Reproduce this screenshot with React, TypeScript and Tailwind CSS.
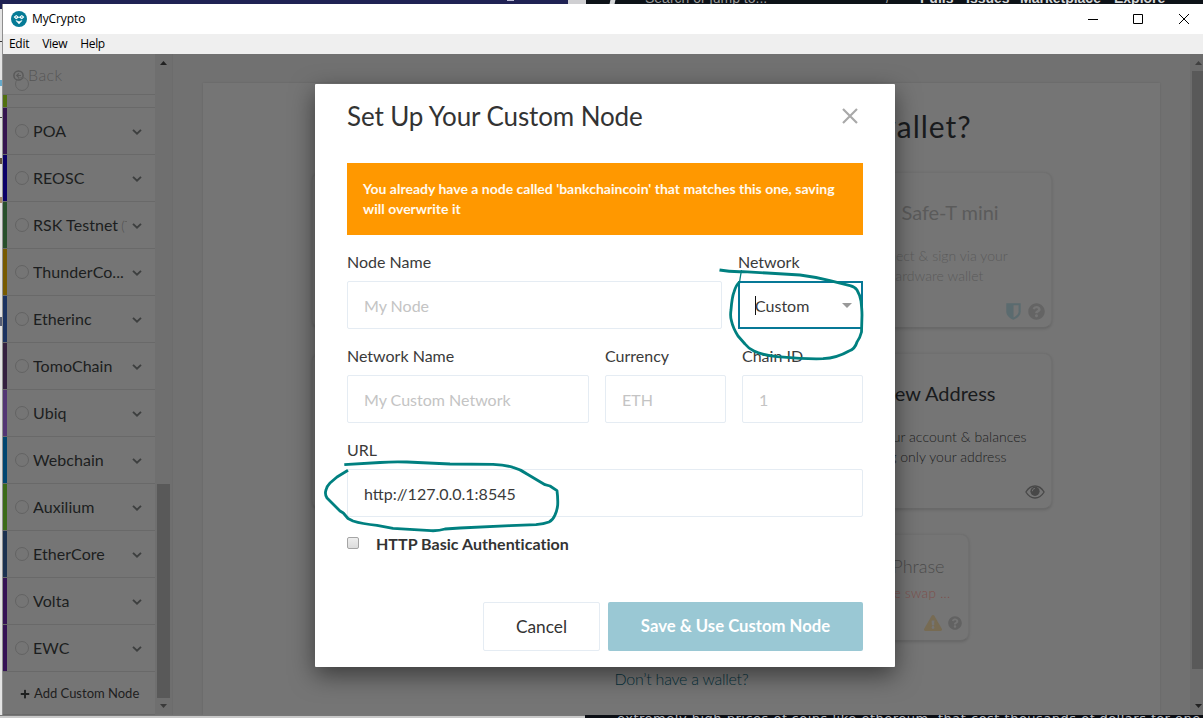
import React from "react";
import { FaQuestionCircle, FaExclamationTriangle, FaPlus } from "react-icons/fa";

const networks = [
  { name: "POA", color: "bg-[#351450]" },
  { name: "REOSC", color: "bg-[#0b0067]" },
  { name: "RSK Testnet", suffix: "(T", color: "bg-[#284f2b]" },
  { name: "ThunderCo...", color: "bg-[#775a00]" },
  { name: "Etherinc", color: "bg-[#1b3260]" },
  { name: "TomoChain", color: "bg-[#34203f]" },
  { name: "Ubiq", color: "bg-[#533574]" },
  { name: "Webchain", color: "bg-[#004570]" },
  { name: "Auxilium", color: "bg-[#3b6a18]" },
  { name: "EtherCore", color: "bg-[#1b3150]" },
  { name: "Volta", color: "bg-[#351255]" },
  { name: "EWC", color: "bg-[#351255]" },
];

const Chevron = () => (
  <svg width="10" height="6" viewBox="0 0 10 6" fill="none" stroke="#3d3f3f" strokeWidth="1.9">
    <path d="M1 .9 5 4.6 9 .9" />
  </svg>
);

const Logo = () => (
  <svg width="16" height="16" viewBox="0 0 16 16">
    <circle cx="8" cy="8" r="8" fill="#057b96" />
    <path d="M2.600 6 5.200 3.900 8 6.100l2.800-2.200L13.400 6l-2.500 2.300L8 6.600 5.100 8.300z" fill="#fff" />
    <path d="M4.300 6 5.300 5.300 6.200 6l-1.100.8zM9.800 6l.9-.7 1 .7-.8.8z" fill="#057b96" />
    <path d="M5 9.600 8 10.700l3-1.100L8 12.900z" fill="#fff" stroke="#fff" strokeWidth=".6" strokeLinejoin="round" />
  </svg>
);

const Shield = () => (
  <svg width="15" height="17" viewBox="0 0 15 17">
    <path fillRule="evenodd" fill="#5b6b6f" d="M.3.3h14.4v8.200c0 4-3.400 6.700-7.200 8.300C3.700 15.200.3 12.500.3 8.500zM7.500 2.300v12.200c2.800-1.400 5.100-3.300 5.100-6.100V2.300z" />
  </svg>
);

const Eye = () => (
  <svg width="20" height="14" viewBox="0 0 20 14">
    <path d="M.9 7C3.200 3.200 6.300 1 10 1s6.800 2.200 9.100 6c-2.300 3.800-5.400 6-9.100 6S3.200 10.800.9 7z" fill="none" stroke="#484848" strokeWidth="1.300" />
    <circle cx="10" cy="6.300" r="4.600" fill="#484848" />
    <path d="M7.400 6.200c0-1.600 1-2.700 2.500-2.700" fill="none" stroke="#757575" strokeWidth="1" />
  </svg>
);

function Sidebar() {
  return (
    <aside className="flex w-[170px] shrink-0 border-r border-[#6c6c6c]">
      <div className="flex w-[152px] flex-col bg-[#757575]">
        <div className="relative flex h-[41px] items-center border-b border-[#696969] pl-[10px] pt-[2px] text-[16px] text-[#565656]">
          <svg width="11" height="11" viewBox="0 0 11 11" fill="none" stroke="#5a5a5a" strokeWidth="1.500">
            <circle cx="5.500" cy="5.500" r="4.600" />
            <path d="M8 5.500H3.800M5.800 3.400 3.700 5.500 5.800 7.600" strokeWidth="1.200" />
          </svg>
          <span className="ml-1 font-light tracking-[0.4px]">Back</span>
          <span className="absolute left-[12px] top-[23px] size-[14px] rounded-full border border-[#636363]" />
        </div>
        <div className="flex h-[13px] border-b border-[#696969]">
          <span className="w-1 bg-[#51700f]" />
        </div>
        {networks.map((n) => (
          <div key={n.name} className="flex h-[47px] items-stretch border-b border-[#696969]">
            <span className={`w-1 shrink-0 ${n.color}`} />
            <div className="flex flex-1 items-center pl-2">
              <span className="size-[14px] shrink-0 rounded-full border border-[#636363]" />
              <span className="ml-1 w-[94px] overflow-hidden whitespace-nowrap text-[16px] leading-6 tracking-[0.05px] text-[#1c1e20]">
                {n.name}
                {n.suffix && <span className="ml-[3px] text-[13px] font-light text-[#4e4e4e]">{n.suffix}</span>}
              </span>
              <span className="ml-[5px] pt-[2px]"><Chevron /></span>
            </div>
          </div>
        ))}
        <div className="flex flex-1 items-center border-b border-[#696969] pl-[17px] pt-px text-[13px] text-[#1e2020]">
          <FaPlus size={10} />
          <span className="ml-[4px]">Add Custom Node</span>
        </div>
      </div>
      <div className="flex w-[17px] flex-col items-center bg-[#6f6f6f] pt-[7px]">
        <svg width="7" height="4"><path d="M0 4 3.500 0 7 4z" fill="#222" /></svg>
        <div className="mt-[419px] h-[214px] w-[13px] bg-[#595959]" />
        <svg className="mt-[6px]" width="7" height="4"><path d="M0 0h7L3.500 4z" fill="#3a3a3a" /></svg>
      </div>
    </aside>
  );
}

const cardBase =
  "flex flex-col rounded-lg border border-[#707070] border-b-[#696969] bg-[#757575] shadow-[0_1px_3px_rgba(0,0,0,0.14)]";

function WalletCard({ title, children, icons, dim }: { title: string; children: React.ReactNode; icons: React.ReactNode; dim?: boolean }) {
  return (
    <div className={`${cardBase} h-[156px] w-[232px] items-center pt-[25px] ${dim ? "text-[#5b5b5b]" : "text-[#191b1d]"}`}>
      <div className={`flex w-full justify-end text-[20px] leading-7 ${dim ? "pr-[52px] tracking-[-0.05px]" : "pr-[55px]"}`}>{title}</div>
      <div className={`mt-[20px] text-center text-[14px] font-light leading-5 tracking-[0.04px] ${dim ? "" : "text-[#202020]"}`}>{children}</div>
      <div className="mt-[15px] flex h-5 w-full items-center justify-end gap-[7px] pr-[6px]">{icons}</div>
    </div>
  );
}

function Page() {
  return (
    <main className="flex flex-1 flex-col bg-[#717171] px-[30px] pt-[29px]">
      <section className="flex flex-1 flex-col items-center bg-[#757575] shadow-[0_0_2px_rgba(0,0,0,0.12)]">
        <h1 className="mt-[23px] whitespace-nowrap pr-[12px] text-[30px] leading-10 tracking-[1px] text-[#191b1d]">
          How would you like to access your wallet?
        </h1>
        <div className="mt-[26px] flex w-[740px] justify-between">
          <div className={`${cardBase} h-[156px] w-[232px]`} />
          <WalletCard dim title="Safe-T mini" icons={<><Shield /><FaQuestionCircle size={17} color="#646464" /></>}>
            Connect &amp; sign via your
            <br />
            hardware wallet
          </WalletCard>
        </div>
        <div className="mt-[25px] flex w-[740px] justify-between">
          <div className={`${cardBase} h-[156px] w-[232px]`} />
          <WalletCard title="View Address" icons={<Eye />}>
            View your account &amp; balances
            <br />
            using only your address
          </WalletCard>
        </div>
        <div className="mt-[25px] flex w-[574px] justify-end">
          <div className={`${cardBase} h-[107px] w-[178px] pt-[19px]`}>
            <div className="text-right pr-[23px] text-[18px] font-light leading-6 text-[#4c4c4c]">Phrase</div>
            <div className="mt-[5px] pr-[17px] text-right text-[13.5px] font-light leading-5 tracking-[0.3px] text-[#7e4f4b]">have swap ...</div>
            <div className="mt-[11px] flex items-center justify-end gap-[6px] pr-[6px]">
              <FaExclamationTriangle size={18} color="#776b53" />
              <FaQuestionCircle size={14} color="#626262" />
            </div>
          </div>
        </div>
        <a className="mt-[26px] text-[16px] font-light leading-6 tracking-[-0.25px] text-[#06323c]">Don’t have a wallet?</a>
      </section>
    </main>
  );
}

function Field({ label, value, className, filled }: { label: string; value: string; className: string; filled?: boolean }) {
  return (
    <div className={`flex flex-col ${className}`}>
      <label className="text-[16px] leading-6 text-[#3a3a3a]">{label}</label>
      <div className={`mt-[7px] flex h-12 items-center rounded-[2px] border border-[#e5ecf3] pl-4 pt-px text-[16px] ${filled ? "text-[#3a3a3a]" : "text-[#c4c4c4]"}`}>
        {value}
      </div>
    </div>
  );
}

function Modal() {
  return (
    <div className="absolute left-[315px] top-[84px] flex h-[583px] w-[580px] flex-col rounded-[1px] bg-white px-8 text-[#333] shadow-[0_8px_24px_rgba(0,0,0,0.5)]">
      <header className="flex h-[64px] items-center justify-between pr-[5px]">
        <h2 className="text-[26px] leading-8 tracking-[-0.11px]">Set Up Your Custom Node</h2>
        <svg width="16" height="16" viewBox="0 0 16 16" stroke="#a9a9a9" strokeWidth="2.200"><path d="m1 1 14 14M15 1 1 15" /></svg>
      </header>
      <div className="mt-[15px] h-[72px] bg-[#ff9800] px-4 py-4 text-[14px] font-bold leading-5 text-[#fffaf0]">
        You already have a node called 'bankchaincoin' that matches this one, saving will overwrite it
      </div>
      <div className="mt-[15px] flex gap-4">
        <Field label="Node Name" value="My Node" className="w-[375px]" />
        <div className="flex w-[125px] flex-col">
          <label className="text-[16px] leading-6 text-[#3a3a3a]">Network</label>
          <div className="mt-[7px] flex h-12 items-center border-2 border-[#067896] pl-[15px] pt-px text-[16px]">
            <span className="h-[19px] w-px bg-[#111]" />
            <span className="-ml-px text-[#3a3a3a]">Custom</span>
            <svg className="ml-auto mr-[9px]" width="10" height="5"><path d="M0 0h10L5 5z" fill="#999" /></svg>
          </div>
        </div>
      </div>
      <div className="mt-[15px] flex gap-4">
        <Field label="Network Name" value="My Custom Network" className="w-[242px]" />
        <Field label="Currency" value="ETH" className="w-[121px]" />
        <Field label="Chain ID" value="1" className="w-[121px]" />
      </div>
      <div className="mt-[15px] flex">
        <Field label="URL" value="http://127.0.0.1:8545" className="w-full" filled />
      </div>
      <div className="mt-[15px] flex h-6 items-center">
        <span className="mb-[3px] size-3 rounded-[2px] border border-[#a5a5a5] bg-gradient-to-b from-[#eee] to-[#dcdcdc]" />
        <span className="ml-[17px] text-[16px] font-bold tracking-[0.04px]">HTTP Basic Authentication</span>
      </div>
      <footer className="mt-[46px] flex justify-end gap-2 text-[17.300px]">
        <div className="flex h-[49px] w-[117px] items-center justify-center rounded-[2px] border border-[#e5ecf3] pt-px">Cancel</div>
        <div className="flex h-[49px] w-[255px] items-center justify-center rounded-[2px] bg-[#9ac8d4] text-[16.700px] font-bold text-white">Save &amp; Use Custom Node</div>
      </footer>
    </div>
  );
}

const Annotations = () => (
  <svg className="pointer-events-none absolute left-0 top-0" width="1203" height="718" fill="none" stroke="#008080" strokeWidth="2.800" strokeLinejoin="round">
    <path d="M719.500 270Q730 272 743 271.700L767 273 800 275Q816 277 830 280.700L850 285.700Q855 287 857 290 860 295 861 301 862 310 862 315L861.500 332Q860 338 857 342 855 349 849 351 837 358 823 358.700 812 359 800 358.300L777 356.700Q762 355 754 351 748 348 745 344L738 336Q733 328 731.500 321 730 316 731 310 732 297 734 292 736 285 739.500 282" />
    <path d="M739.500 282 741.500 270" strokeWidth="1.300" />
    <path d="M344.300 464.700 380 462.500Q393 461.500 407 462L450 464 493 464.300Q505 465 513 467.300 520 469 527 474L545 484.700 550 486 557 490.700Q558 498 557.700 505 557 511 555 515 553 520 549 522 544 524 536 524.700L510 525.700 460 528 445 529Q439 531 431 530.700L393 528.300 377 525.300Q362 524 353 521L348 518.500 343.300 513 340 511 327 498Q324.500 494 326 490 327 486 330 483L337 477 348 470.300" />
  </svg>
);

export default function App() {
  return (
    <div className="relative flex h-[718px] w-[1203px] flex-col overflow-hidden bg-[#dedede] font-['Lato',sans-serif]">
      <div className="flex h-1 shrink-0 overflow-hidden font-['Liberation_Sans',sans-serif] text-[14px] leading-[14px]">
        <div className="w-[568px] bg-[#202254]"><div className="ml-[507px] h-px w-[7px] bg-[#babbd4]" /></div>
        <div className="w-[18px] bg-[#cfcfd2]" />
        <div className="flex flex-1 bg-[#0d1218] text-[#d5d7d9]">
          <span className="ml-[24px] h-1 w-[5px] -skew-x-12 bg-[#d5d7d9]" />
          <span className="-mt-[9px] ml-[30px] w-[241px] text-[#999]">Search or jump to...</span>
          <span className="-mt-[9px] w-[7px] text-[#999]">/</span>
          <span className="-mt-[9px] ml-[27px] w-[46px] font-bold">Pulls</span>
          <span className="-mt-[9px] w-[54px] font-bold">Issues</span>
          <span className="-mt-[9px] w-[94px] font-bold">Marketplace</span>
          <span className="-mt-[9px] font-bold">Explore</span>
        </div>
      </div>
      <div className="flex h-[711px] shrink-0">
        <div className="flex w-[3px] shrink-0 flex-col border-r border-[#8e8e8e] bg-[#e4e4e4]">
          <span className="h-[5px] bg-[#202254]" />
          <span className="mt-[32px] h-px bg-[#333]" />
          <span className="mt-[38px] h-[6px] bg-[#65a9ca]" />
          <span className="mt-[31px] h-px bg-[#444]" />
          <span className="mt-[40px] h-[6px] bg-[#63523e]" />
          <span className="mt-[33px] h-[6px] bg-[#a98867]" />
          <span className="mt-[114px] h-[9px] bg-[#555d74]" />
        </div>
        <div className="flex flex-1 flex-col">
          <div className="flex h-[30px] items-center bg-white pl-2 font-['Open_Sans',sans-serif] text-[12px] text-black">
            <Logo />
            <span className="ml-[5px] tracking-[-0.1px]">MyCrypto</span>
            <div className="ml-auto flex items-center gap-[36px] pr-[14px]">
              <svg className="-mr-px" width="10" height="10" stroke="#000"><path d="M0 5.500h10" /></svg>
              <svg width="10" height="10" stroke="#000" fill="none"><path d="M.5.500h9v9h-9z" /></svg>
              <svg width="10" height="10" stroke="#000"><path d="m0 0 10 10M10 0 0 10" /></svg>
            </div>
          </div>
          <div className="flex h-5 items-center gap-[13px] bg-[#efefef] pl-[6px] font-['Open_Sans',sans-serif] text-[12px] tracking-[-0.3px] text-black">
            <span>Edit</span>
            <span>View</span>
            <span>Help</span>
          </div>
          <div className="flex h-[661px] overflow-hidden bg-[#717171]">
            <Sidebar />
            <Page />
            <div className="flex w-[13px] flex-col items-end bg-[#6c6c6c] pt-[7px]">
              <svg className="mr-px" width="7" height="4"><path d="M0 4 3.500 0 7 4z" fill="#404040" /></svg>
              <div className="mt-[6px] h-[598px] w-[11px] bg-[#595959]" />
              <svg className="mr-px mt-[35px]" width="7" height="4"><path d="M0 0h7L3.500 4z" fill="#222" /></svg>
            </div>
          </div>
        </div>
      </div>
      <div className="flex h-[3px] shrink-0 overflow-hidden">
        <div className="w-[585px] border-t border-[#777] bg-[#c9c9c9]" />
        <div className="flex-1 whitespace-nowrap bg-[#0b0e14] pl-8 font-['DejaVu_Sans',sans-serif] text-[13px] leading-[8px] tracking-[0.5px] text-[#b8bcc4]">
          extremely high prices of coins like ethereum, that cost thousands of dollars for one
        </div>
      </div>
      <Modal />
      <Annotations />
    </div>
  );
}
